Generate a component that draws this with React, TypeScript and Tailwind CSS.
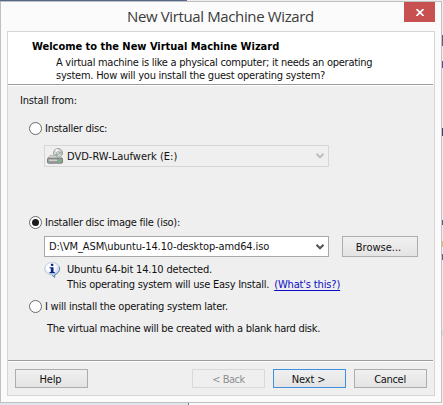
import type { ReactNode } from "react";

function Radio({ checked = false, className, children }: { checked?: boolean; className: string; children: ReactNode }) {
  return (
    <div role="radio" aria-checked={checked} className="flex h-[13px] items-start">
      <span className="flex size-[13px] shrink-0 items-center justify-center rounded-full border border-[#6a6a6a] bg-white">
        {checked && <span className="size-[7px] rounded-full bg-[#1c1c1c]" />}
      </span>
      <span className={"ml-[3px] " + className}>{children}</span>
    </div>
  );
}

function Arrow({ color }: { color: string }) {
  return (
    <svg width="8" height="6" viewBox="0 0 8 6" className="shrink-0">
      <path d="M.5.8L4 4.300 7.500.8" fill="none" stroke={color} strokeWidth="2.100" />
    </svg>
  );
}

function DriveIcon() {
  return (
    <svg width="16" height="16" viewBox="0 0 16 16" className="shrink-0">
      <circle cx="11" cy="5" r="4.500" fill="#d5d8d6" stroke="#8b8f8d" strokeWidth="0.8" />
      <path d="M11 5L8 2.300Q9.300 1.100 11 1z" fill="#f7fbf8" />
      <path d="M11 5l3.700-2.200Q15.500 5 14.700 7z" fill="#a9b7ae" />
      <path d="M11 5l-.8 4q-2-.4-2.900-1.900z" fill="#8fb394" />
      <circle cx="11" cy="5" r="1.300" fill="#fff" stroke="#888" strokeWidth="0.7" />
      <path d="M3 7.500h5.500l1.500 1.700 3.500-.7L15.500 10.500H.5z" fill="#d4d4d4" stroke="#a0a0a0" strokeWidth="0.6" />
      <rect x="0.500" y="10.200" width="15" height="5" rx="1" fill="#9a9e9c" stroke="#6b6f6d" strokeWidth="0.8" />
      <rect x="2" y="11.700" width="8" height="1" fill="#e2e5e3" />
      <rect x="11.700" y="11.300" width="1.600" height="2.600" fill="#4fd465" />
    </svg>
  );
}

function InfoIcon() {
  return (
    <svg width="17" height="16" viewBox="0 0 17 16" className="mt-px shrink-0">
      <defs>
        <radialGradient id="bubble" cx="0.4" cy="0.3" r="0.75">
          <stop offset="0.35" stopColor="#fff" />
          <stop offset="1" stopColor="#a9c3df" />
        </radialGradient>
      </defs>
      <path d="M8.300.6C12.500.6 15.700 3 15.700 6.700c0 3-2.100 5.100-4.900 5.800L10.600 15.400 7.600 12.900C3.700 12.700.8 10.200.8 6.700.8 3 4.100.6 8.300.6z" fill="url(#bubble)" stroke="#b3c3d4" strokeWidth="0.8" />
      <path d="M15.300 5c.9 3-.9 6.400-4.500 7.500L10.600 15.400 8 13" fill="none" stroke="#5f86ae" strokeWidth="1" />
      <rect x="6.800" y="1.700" width="2.600" height="2.300" rx="0.8" fill="#0c2486" />
      <path d="M5.500 5.200h4v4.900h1.300v1.100H5.500v-1.100h1.300V6.300H5.500z" fill="#0c2486" />
    </svg>
  );
}

const button = "flex h-[19px] w-[73px] items-start justify-center border pt-[3px] ";
const face = "bg-linear-to-b from-[#f0f0f0] to-[#e4e4e4] ";

export default function App() {
  return (
    <div className="relative h-[405px] w-[443px] overflow-hidden bg-[#eeeeee] font-['DejaVu_Sans_Condensed','DejaVu_Sans',sans-serif] text-[11px] leading-[13px] whitespace-nowrap text-[#111]">
      {/* Slivers of the windows behind the dialog */}
      <div className="absolute top-0 left-0 h-px w-[187px] bg-[#53678c]" />
      <div className="absolute top-[403px] left-0 h-[2px] w-[188px] bg-[#dfe6ee]" />
      <div className="absolute top-[403px] left-[188px] h-[2px] w-px bg-[#7b7f84]" />
      <div className="absolute top-[403px] left-[189px] h-[2px] w-[254px] bg-[#f8f8f8]" />
      <div className="absolute top-[35px] left-[442px] h-[11px] w-px bg-[#76507c]" />
      <div className="absolute top-[61px] left-[442px] h-[7px] w-px bg-[#54549c]" />
      <div className="absolute top-[128px] left-[442px] h-[8px] w-px bg-[#35496e]" />
      <div className="absolute top-[220px] left-[442px] h-[5px] w-px bg-[#49677b]" />
      <div className="absolute top-[241px] left-[442px] h-[6px] w-px bg-[#e2bd73]" />
      <div className="absolute top-[254px] left-[442px] h-[6px] w-px bg-[#5c6680]" />
      <div className="absolute top-[330px] left-[442px] h-[6px] w-px bg-[#c9e7df]" />

      <div className="absolute top-px left-0 flex h-[402px] w-[442px] flex-col border border-[#c0c0c0] bg-[#fbfbfb]">
        <header className="relative h-[29px] shrink-0">
          <h1 className="pt-[4px] pl-[126px] font-['Open_Sans',sans-serif] text-[15px] leading-[21px] tracking-[-0.37px] text-[#3b3b3b]">New Virtual Machine Wizard</h1>
          <button aria-label="Close" className="absolute top-0 right-[6px] flex h-[20px] w-[31px] items-center justify-center bg-[#c75050]">
            <svg width="8" height="7" viewBox="0 0 8 7" stroke="#fff" strokeWidth="1.600">
              <path d="M.5 0l7 7M7.500 0l-7 7" />
            </svg>
          </button>
        </header>

        <main className="ml-[6px] flex h-[365px] w-[428px] flex-col border border-[#d5d5d5] bg-[#efefef]">
          <section className="h-[52px] shrink-0 bg-white pt-[8px] pl-[24px]">
            <h2 className="font-bold tracking-[-0.02px] text-black">Welcome to the New Virtual Machine Wizard</h2>
            <p className="mt-[3px] pl-[24px] tracking-[-0.27px]">A virtual machine is like a physical computer; it needs an operating</p>
            <p className="pl-[24px] tracking-[-0.24px]">system. How will you install the guest operating system?</p>
          </section>
          <div className="mr-[1px] h-[2px] shrink-0 border-b border-white bg-[#9c9c9c]" />

          <section className="flex h-[274px] shrink-0 flex-col pl-[21px]">
            <p className="-ml-[9px] mt-[8px] tracking-[-0.18px]">Install from:</p>
            <div className="mt-[15px]">
              <Radio className="tracking-[-0.26px]">Installer disc:</Radio>
            </div>
            <div className="mt-[10px] ml-[15px] flex h-[22px] w-[285px] items-center border border-[#d7d7d7] pr-[4px] pl-[2px]">
              <DriveIcon />
              <span className="mt-px ml-[4px]">DVD-RW-Laufwerk (E:)</span>
              <span className="ml-auto"><Arrow color="#bdbdbd" /></span>
            </div>
            <div className="mt-[49px]">
              <Radio checked className="tracking-[-0.25px]">Installer disc image file (iso):</Radio>
            </div>
            <div className="mt-[7px] ml-[15px] flex h-[21px] items-stretch">
              <div className="flex w-[285px] items-center border border-[#a8a8a8] bg-white pr-[4px] pl-[4px]">
                <span className="tracking-[-0.12px]">D:\VM_ASM\ubuntu-14.10-desktop-amd64.iso</span>
                <span className="ml-auto"><Arrow color="#555" /></span>
              </div>
              <button className={"ml-[13px] flex w-[76px] items-start justify-center border border-[#adadad] pt-[4px] pr-[3px] " + face}>Browse...</button>
            </div>
            <div className="mt-[4px] ml-[15px] flex h-[37px]">
              <InfoIcon />
              <div className="ml-[6px] pt-[2px]">
                <p className="tracking-[-0.18px]">Ubuntu 64-bit 14.10 detected.</p>
                <p className="mt-[2px] flex tracking-[-0.24px]">
                  This operating system will use Easy Install.
                  <a className="ml-[5px] tracking-[-0.15px] text-[#0c0cc4] underline underline-offset-[2px]">(What's this?)</a>
                </p>
              </div>
            </div>
            <div className="mt-[2px]">
              <Radio className="tracking-[-0.23px]">I will install the operating system later.</Radio>
            </div>
            <p className="mt-[9px] ml-[18px] tracking-[-0.29px]">The virtual machine will be created with a blank hard disk.</p>
          </section>

          <div className="mr-[1px] h-[2px] shrink-0 border-b border-white bg-[#9c9c9c]" />
          <footer className="flex pt-[7px] pl-[7px]">
            <button className={button + "border-[#adadad] pr-[2px] tracking-[-0.2px] " + face}>Help</button>
            <button className={button + "ml-[104px] border-[#d9d9d9] tracking-[-0.5px] text-[#8f8f8f]"}>&lt; Back</button>
            <button className={button + "ml-[8px] border-[#3f8fdc] pr-[2px] tracking-[-0.15px] " + face}>Next &gt;</button>
            <button className={button + "ml-[8px] border-[#adadad] pr-[1px] tracking-[-0.3px] " + face}>Cancel</button>
          </footer>
        </main>
      </div>
    </div>
  );
}
